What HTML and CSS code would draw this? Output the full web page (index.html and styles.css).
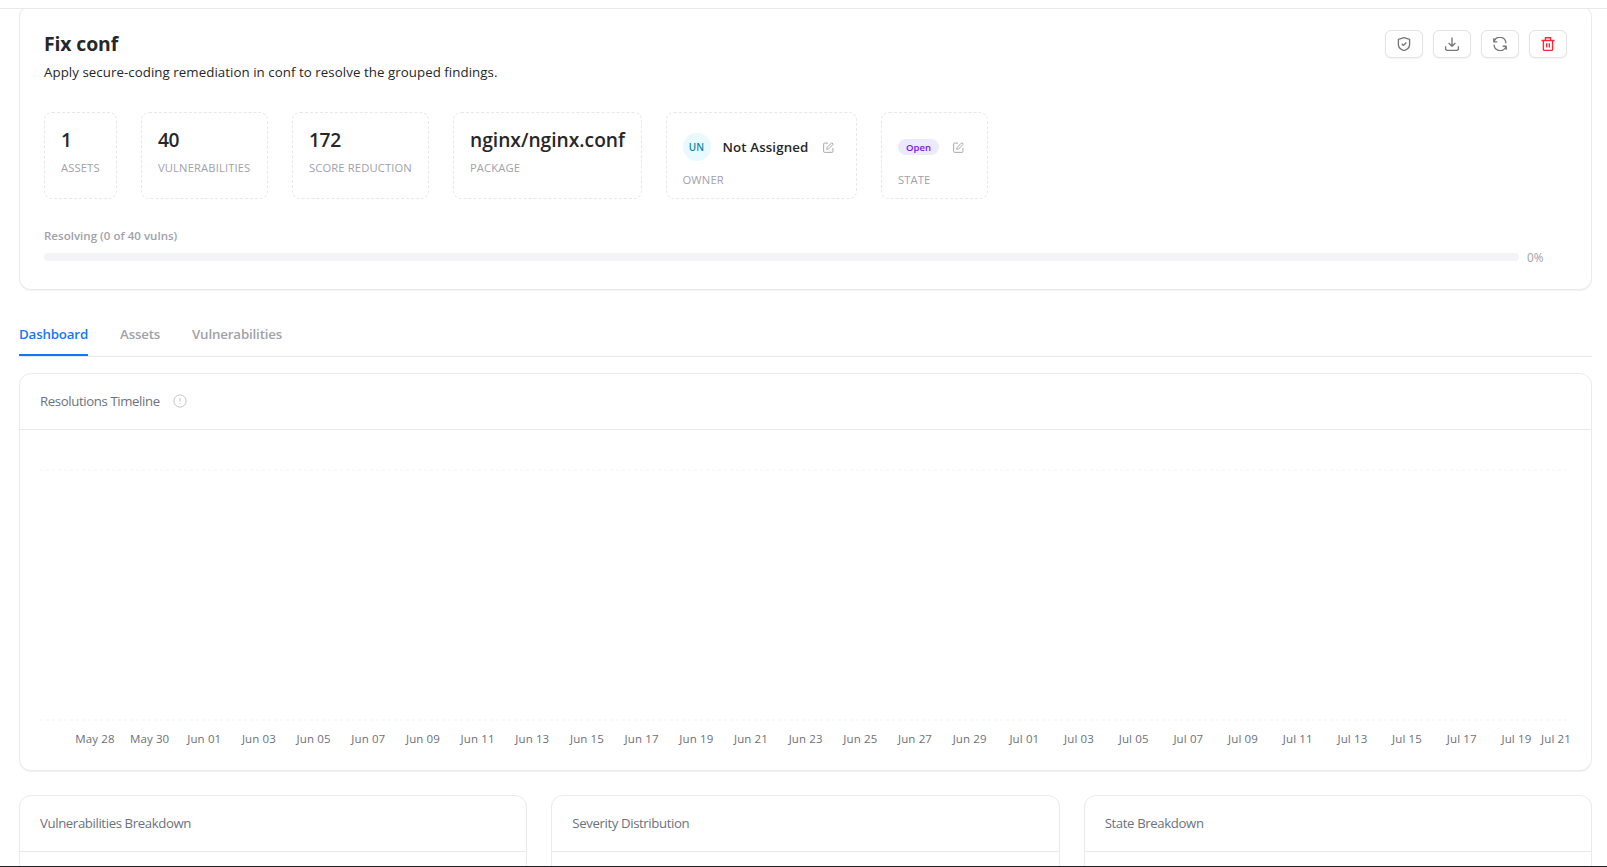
FILE: index.html
```html
<!DOCTYPE html>
<html lang="en">
<head>
    <meta charset="UTF-8">
    <meta name="viewport" content="width=device-width, initial-scale=1.0">
    <title>Fix conf</title>
    <link rel="stylesheet" href="styles.css">
</head>
<body>
    <div class="topbar"></div>

    <main class="page">
        <section class="card summary">
            <div class="summary-head">
                <div>
                    <h1>Fix conf</h1>
                    <p class="description">Apply secure-coding remediation in conf to resolve the grouped findings.</p>
                </div>
                <div class="actions">
                    <button class="icon-btn" aria-label="Accept risk">
                        <svg viewBox="0 0 14 14"><path d="M7 .7 12.6 2.3V7.5C12.6 10.5 10.2 12.6 7 13.6 3.8 12.6 1.4 10.5 1.4 7.5V2.3Z"/><path d="M4.8 6.8 6.4 8.4 9.3 5.5"/></svg>
                    </button>
                    <button class="icon-btn" aria-label="Download">
                        <svg viewBox="0 0 14 14"><path d="M7 .4V9.3M3.6 6 7 9.3 10.4 6M.6 9.2V11.8Q.6 13.3 2.1 13.3H11.9Q13.4 13.3 13.4 11.8V9.2"/></svg>
                    </button>
                    <button class="icon-btn" aria-label="Refresh">
                        <svg viewBox="0 0 14 14"><path d="M.8 1.3V4.8H4.3M1 4.6A6.1 6.1 0 0 1 12.9 6.2M13.2 12.7V9.2H9.7M13 9.4A6.1 6.1 0 0 1 1.1 7.8"/></svg>
                    </button>
                    <button class="icon-btn danger" aria-label="Delete">
                        <svg viewBox="0 0 14 14"><path d="M.5 3.5H13.5M2.4 3.5V12.4Q2.4 13.4 3.4 13.4H10.6Q11.6 13.4 11.6 12.4V3.5M4.4 3.3V.7H9.6V3.3M5.7 6.3V10.4M8.3 6.3V10.4"/></svg>
                    </button>
                </div>
            </div>

            <div class="stats">
                <div class="stat">
                    <div class="stat-value">1</div>
                    <div class="stat-label">ASSETS</div>
                </div>
                <div class="stat stat-vulns">
                    <div class="stat-value">40</div>
                    <div class="stat-label">VULNERABILITIES</div>
                </div>
                <div class="stat stat-score">
                    <div class="stat-value">172</div>
                    <div class="stat-label">SCORE REDUCTION</div>
                </div>
                <div class="stat stat-package">
                    <div class="stat-value">nginx/nginx.conf</div>
                    <div class="stat-label">PACKAGE</div>
                </div>
                <div class="stat stat-owner">
                    <div class="stat-row">
                        <span class="avatar">UN</span>
                        <span class="owner-name">Not Assigned</span>
                        <svg class="edit" viewBox="0 0 12 12"><path d="M5.5 1.2H1.7Q.7 1.2.7 2.2V10.3Q.7 11.3 1.7 11.3H9.8Q10.8 11.3 10.8 10.3V6.5M4 8 4.5 5.9 9.5.8 11.2 2.5 6.1 7.5Z"/></svg>
                    </div>
                    <div class="stat-label">OWNER</div>
                </div>
                <div class="stat stat-state">
                    <div class="stat-row">
                        <span class="badge">Open</span>
                        <svg class="edit" viewBox="0 0 12 12"><path d="M5.5 1.2H1.7Q.7 1.2.7 2.2V10.3Q.7 11.3 1.7 11.3H9.8Q10.8 11.3 10.8 10.3V6.5M4 8 4.5 5.9 9.5.8 11.2 2.5 6.1 7.5Z"/></svg>
                    </div>
                    <div class="stat-label">STATE</div>
                </div>
            </div>

            <div class="progress-label">Resolving (0 of 40 vulns)</div>
            <div class="progress">
                <div class="progress-track"></div>
                <span class="progress-value">0%</span>
            </div>
        </section>

        <nav class="tabs">
            <a class="tab active">Dashboard</a>
            <a class="tab tab-assets">Assets</a>
            <a class="tab">Vulnerabilities</a>
        </nav>

        <section class="card timeline">
            <header class="card-head">
                <h2>Resolutions Timeline</h2>
                <svg class="info" viewBox="0 0 14 14"><circle cx="7" cy="7" r="6.1"/><path d="M7 3.8V7.6M7 9V10.2"/></svg>
            </header>
            <div class="chart">
                <div class="plot">
                    <svg class="gridline"><line x1="0" y1="1" x2="100%" y2="1"/></svg>
                    <svg class="gridline"><line x1="0" y1="1" x2="100%" y2="1"/></svg>
                </div>
                <div class="axis">
                    <span>May 28</span><span>May 30</span><span>Jun 01</span><span>Jun 03</span>
                    <span>Jun 05</span><span>Jun 07</span><span>Jun 09</span><span>Jun 11</span>
                    <span>Jun 13</span><span>Jun 15</span><span>Jun 17</span><span>Jun 19</span>
                    <span>Jun 21</span><span>Jun 23</span><span>Jun 25</span><span>Jun 27</span>
                    <span>Jun 29</span><span>Jul 01</span><span>Jul 03</span><span>Jul 05</span>
                    <span>Jul 07</span><span>Jul 09</span><span>Jul 11</span><span>Jul 13</span>
                    <span>Jul 15</span><span>Jul 17</span><span>Jul 19</span><span>Jul 21</span>
                </div>
            </div>
        </section>

        <div class="breakdowns">
            <section class="card">
                <header class="card-head"><h2>Vulnerabilities Breakdown</h2></header>
            </section>
            <section class="card">
                <header class="card-head"><h2>Severity Distribution</h2></header>
            </section>
            <section class="card">
                <header class="card-head"><h2>State Breakdown</h2></header>
            </section>
        </div>
    </main>
</body>
</html>
```
FILE: styles.css
```css
* {
    box-sizing: border-box;
}
body {
    margin: 0;
    height: 867px;
    overflow: hidden;
    display: flex;
    flex-direction: column;
    background: #fff;
    border-bottom: 1px solid #1f1f23;
    font-family: "Open Sans", "Noto Sans", sans-serif;
    font-size: 13.3px;
    color: #27272a;
}
h1, h2, p {
    margin: 0;
}
svg {
    display: block;
    fill: none;
    stroke: currentColor;
    stroke-linejoin: round;
}
.topbar {
    flex: none;
    height: 9px;
    background: #fff;
    border-bottom: 1px solid #e8e8e8;
    position: relative;
    z-index: 1;
}
.page {
    flex: 1;
    min-height: 0;
    overflow: hidden;
    margin-top: -4px;
    padding: 0 15px 0 19px;
}
.card {
    border: 1px solid #ebebec;
    border-radius: 12px;
    background: #fff;
    box-shadow: 0 1px 1px rgba(0, 0, 0, 0.06);
}

/* summary */
.summary {
    height: 285px;
    padding: 24px;
}
.summary-head {
    display: flex;
    justify-content: space-between;
    height: 82px;
}
h1 {
    font-size: 19.4px;
    font-weight: 700;
    line-height: 28px;
    letter-spacing: -0.12px;
}
.description {
    line-height: 22px;
    margin-top: 3px;
    letter-spacing: 0.05px;
}
.actions {
    display: flex;
    gap: 10px;
}
.icon-btn {
    display: flex;
    align-items: center;
    justify-content: center;
    width: 38px;
    height: 28px;
    padding: 0;
    color: #77777a;
    background: #fff;
    border: 1px solid #e4e4e5;
    border-radius: 6px;
    box-shadow: 0 1px 2px rgba(0, 0, 0, 0.05);
}
.icon-btn svg {
    width: 14px;
    height: 14px;
    stroke-width: 1.35;
}
.icon-btn.danger {
    color: #ff2536;
}
.stats {
    display: flex;
    gap: 24px;
    height: 87px;
}
.stat {
    width: 73px;
    padding: 12px 0 0 16px;
    border: 1px dashed #e8e8ea;
    border-radius: 8px;
    white-space: nowrap;
}
.stat-vulns { width: 127px; }
.stat-score { width: 137px; }
.stat-package { width: 189px; }
.stat-owner { width: 191px; }
.stat-state { width: 107px; }
.stat-owner {
    padding-left: 15.5px;
}
.stat-value {
    font-size: 19.2px;
    font-weight: 600;
    line-height: 30px;
}
.stat-vulns .stat-value, .stat-score .stat-value {
    letter-spacing: -0.4px;
}
.stat-label {
    font-size: 11.2px;
    line-height: 18px;
    margin-top: 4px;
    color: #a1a1aa;
    letter-spacing: 0.14px;
}
.stat-row {
    display: flex;
    align-items: center;
    height: 44px;
}
.stat-row + .stat-label {
    margin-top: 2px;
}
.avatar {
    width: 28px;
    height: 28px;
    margin-right: 12px;
    border-radius: 50%;
    background: #e8f9ff;
    color: #1587a8;
    font-size: 10px;
    font-weight: 600;
    line-height: 28px;
    text-align: center;
}
.owner-name {
    width: 100px;
    font-weight: 600;
    letter-spacing: 0.12px;
}
.edit {
    width: 11px;
    height: 11px;
    color: #a1a1aa;
}
.badge {
    width: 41px;
    height: 16px;
    margin-right: 14px;
    border-radius: 8px;
    background: #ede9fe;
    color: #7a12e6;
    font-size: 9.5px;
    font-weight: 600;
    line-height: 17px;
    text-align: center;
}
.progress-label {
    margin-top: 28px;
    font-size: 11.5px;
    font-weight: 600;
    line-height: 18px;
    color: #a1a1aa;
    letter-spacing: 0.03px;
}
.progress {
    display: flex;
    align-items: center;
    height: 18px;
    margin-top: 3px;
}
.progress-track {
    width: 1475px;
    height: 8px;
    border-radius: 4px;
    background: #f3f4f6;
}
.progress-value {
    margin-left: 8px;
    padding-top: 1px;
    font-size: 11.8px;
    line-height: 17px;
    color: #a1a1aa;
}

/* tabs */
.tabs {
    display: flex;
    gap: 32px;
    height: 47px;
    margin: 20px 0 16px;
    border-bottom: 1px solid #e8e8ea;
}
.tab {
    height: 46px;
    padding-top: 13px;
    font-weight: 600;
    line-height: 22px;
    color: #a1a1aa;
    letter-spacing: -0.16px;
}
.tab.active {
    width: 69px;
    color: #1677f2;
    border-bottom: 2px solid #1677f2;
}
.tab-assets {
    width: 40px;
}

/* cards */
.card-head {
    display: flex;
    align-items: center;
    height: 56px;
    padding: 0 20px 1px;
    border-bottom: 1px solid #e9e9eb;
}
h2 {
    font-size: 13.2px;
    font-weight: 400;
    line-height: 22px;
    color: #6b7280;
    letter-spacing: -0.38px;
}
.info {
    width: 14px;
    height: 14px;
    margin-left: 13px;
    color: #c4c4c8;
}
.timeline {
    height: 398px;
}
.chart {
    padding: 39px 20px 0;
}
.plot {
    display: flex;
    flex-direction: column;
    justify-content: space-between;
    height: 252px;
}
.gridline {
    width: 1530px;
    height: 2px;
    stroke: #f9f9fa;
    stroke-width: 2;
    stroke-dasharray: 3 3;
}
.axis {
    display: grid;
    grid-template-columns: repeat(27, 54.68px) minmax(0, 1fr);
    padding: 9px 0 0 27.6px;
    font-size: 11.5px;
    line-height: 18px;
    color: #6e7079;
    letter-spacing: 0.12px;
    white-space: nowrap;
}
.axis span {
    justify-self: center;
}
.axis span:last-child {
    justify-self: end;
}
.breakdowns {
    display: grid;
    grid-template-columns: repeat(3, 1fr);
    gap: 24px;
    margin-top: 24px;
}
.breakdowns .card {
    height: 300px;
}
```
